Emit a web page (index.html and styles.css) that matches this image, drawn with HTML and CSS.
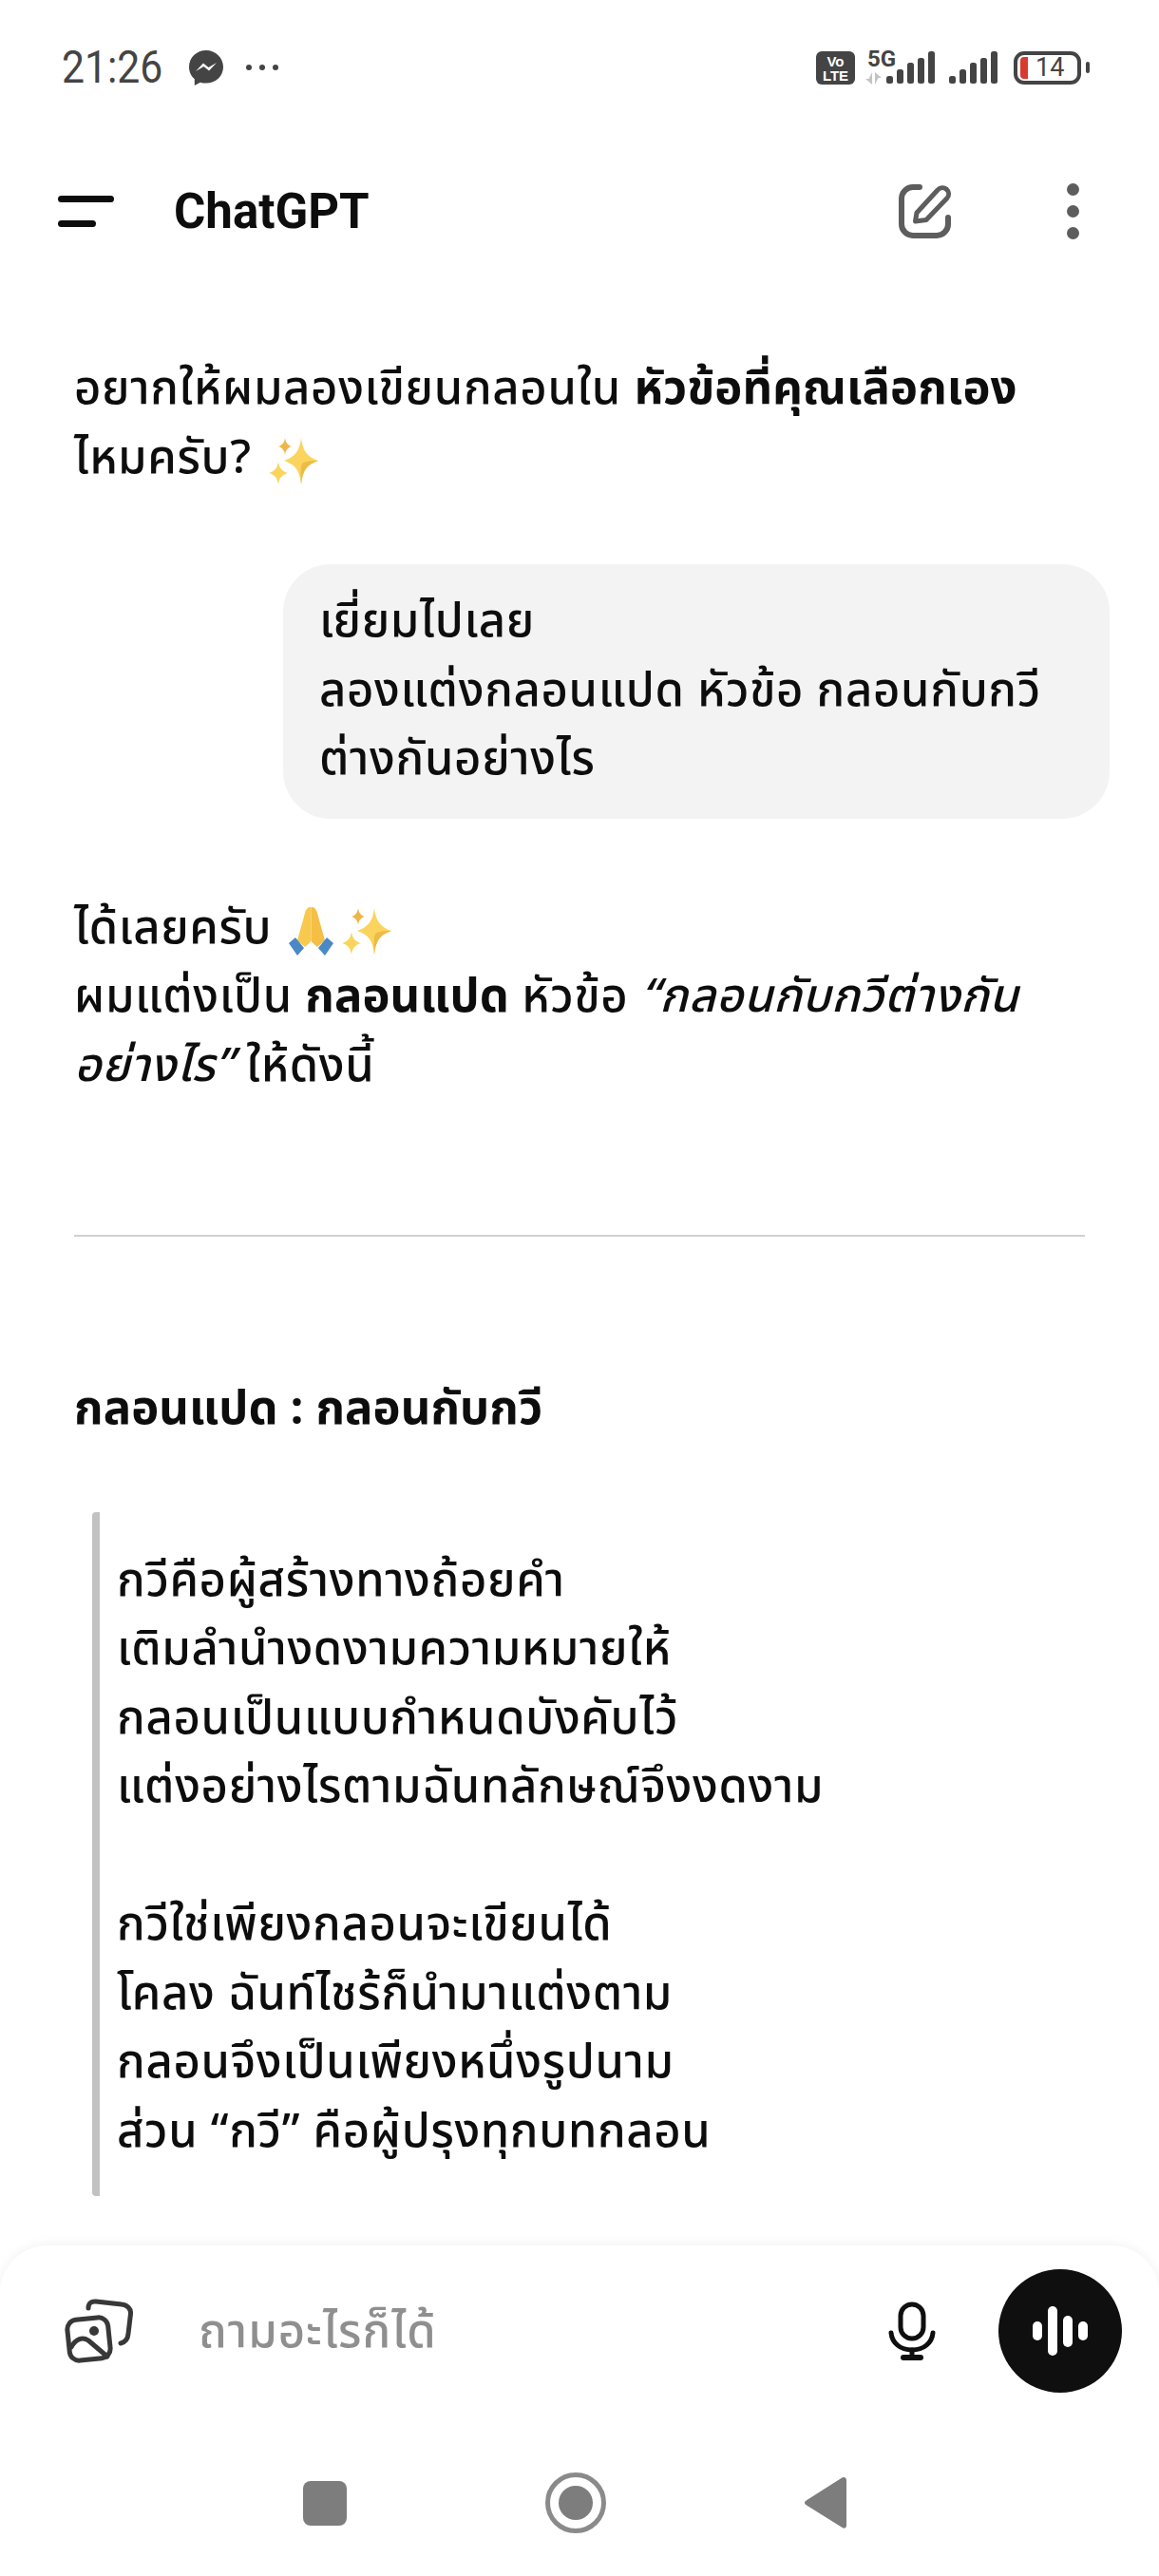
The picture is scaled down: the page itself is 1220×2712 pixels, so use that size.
FILE: index.html
```html
<!DOCTYPE html>
<html lang="th">
<head>
<meta charset="utf-8">
<title>ChatGPT</title>
<link rel="stylesheet" href="styles.css">
</head>
<body>
<svg class="defs" width="0" height="0" aria-hidden="true">
  <defs>
    <symbol id="sparkles" viewBox="0 0 52 49">
      <path d="M34 0c1.500 13 5.500 19.500 18 24-12.500 4-16.500 11-18 25-1.500-14-5.500-21-18-25 12.500-4.500 16.500-11 18-24z" fill="#fad45c"/>
      <path d="M34 49c-.6-8-1-18 1-22 3-2.500 10-3 17-3-12.500 4-16.500 11-18 25z" fill="#eebc45"/>
      <path d="M17 0c.8 5 2.500 7.500 7 9-4.500 1.500-6.200 4-7 8.500-.8-4.500-2.500-7-7-8.500 4.500-1.500 6.200-4 7-9z" fill="#eeb548"/>
      <path d="M10 25c1 6.500 3.500 10 10 12-6.500 2-9 5.500-10 12-1-6.500-3.500-10-10-12 6.500-2 9-5.500 10-12z" fill="#fad45c"/>
    </symbol>
  </defs>
</svg>
<div class="screen">
  <header class="status">
    <div class="status-left">
      <span class="clock">21:26</span>
      <svg class="messenger" viewBox="0 0 36 37"><path d="M18 0C8 0 0 7.500 0 17.500c0 5.300 2.200 9.800 5.800 12.800V37l6-3.300c2 .6 4 .9 6.200.9 10 0 18-7.500 18-17.100S28 0 18 0z" fill="#444"/><path d="M7 22l8-8.500 5.500 4.500 8.500-5-8 8.500-5.500-4.500z" fill="#fff"/></svg>
      <span class="dots3"><i></i><i></i><i></i></span>
    </div>
    <div class="status-right">
      <span class="volte">Vo<br>LTE</span>
      <span class="sig5g">
        <span class="label5g">5G</span>
        <svg class="arrows" viewBox="0 0 17 13"><path d="M7 0v13L0 7h3.500zM10 13V0l7 6h-3.500z" fill="#c4c4c4"/></svg>
      </span>
      <svg class="signal" viewBox="0 0 51 34"><g fill="#444"><rect x="0" y="26" width="7" height="8" rx="2.500"/><rect x="11" y="19" width="7" height="15" rx="2.500"/><rect x="22" y="12" width="7" height="22" rx="2.500"/><rect x="33" y="7" width="7" height="27" rx="2.500"/><rect x="44" y="0" width="7" height="34" rx="2.500"/></g></svg>
      <svg class="signal second" viewBox="0 0 51 34"><g fill="#444"><rect x="0" y="26" width="7" height="8" rx="2.500"/><rect x="11" y="19" width="7" height="15" rx="2.500"/><rect x="22" y="12" width="7" height="22" rx="2.500"/><rect x="33" y="7" width="7" height="27" rx="2.500"/><rect x="44" y="0" width="7" height="34" rx="2.500"/></g></svg>
      <span class="battery"><i class="level"></i><span class="pct">14</span></span>
      <i class="nub"></i>
    </div>
  </header>

  <nav class="topbar">
    <div class="burger"><i></i><i></i></div>
    <h1 class="title">ChatGPT</h1>
    <svg class="edit" viewBox="0 0 57 59" fill="none" stroke="#5d5d5d" stroke-width="6" stroke-linecap="round" stroke-linejoin="round"><path d="M23 4H16A12 12 0 0 0 4 16V43A12 12 0 0 0 16 55H41A12 12 0 0 0 53 43V36"/><path d="M18.500 40L20 31 42 7A6.500 6.500 0 0 1 52 15.500L30 38.500z" stroke-width="5"/></svg>
    <div class="more"><i></i><i></i><i></i></div>
  </nav>

  <main class="chat">
    <p class="para">อยากให้ผมลองเขียนกลอนใน <b>หัวข้อที่คุณเลือกเอง</b><br>ไหมครับ? <svg class="emoji"><use href="#sparkles"/></svg></p>

    <div class="bubble">เยี่ยมไปเลย<br>ลองแต่งกลอนแปด หัวข้อ กลอนกับกวี<br>ต่างกันอย่างไร</div>

    <p class="para reply">ได้เลยครับ <svg class="emoji pray" viewBox="0 0 47 52"><path d="M22.500 1c-3 0-5 3-6.500 10L9 36l8 7 5-4.500c1.200-1 1.500-2 1.500-4V2c0-.6-.5-1-1-1z" fill="#f8c94f"/><path d="M24.500 1c3 0 5 3 6.500 10l7 25-8 7-5-4.500c-1.200-1-1.500-2-1.500-4V2c0-.6.500-1 1-1z" fill="#f4bf44"/><path d="M0 39l7-6 9 11-7 8zM47 39l-7-6-9 11 7 8z" fill="#4a88c6"/></svg> <svg class="emoji follow"><use href="#sparkles"/></svg><br>ผมแต่งเป็น <b>กลอนแปด</b> หัวข้อ <em>“กลอนกับกวีต่างกัน<br>อย่างไร”</em> ให้ดังนี้</p>

    <hr class="rule">

    <h2 class="poem-title">กลอนแปด : กลอนกับกวี</h2>

    <blockquote class="poem">
      <p>กวีคือผู้สร้างทางถ้อยคำ<br>เติมลำนำงดงามความหมายให้<br>กลอนเป็นแบบกำหนดบังคับไว้<br>แต่งอย่างไรตามฉันทลักษณ์จึงงดงาม</p>
      <p>กวีใช่เพียงกลอนจะเขียนได้<br>โคลง ฉันท์ไชร้ก็นำมาแต่งตาม<br>กลอนจึงเป็นเพียงหนึ่งรูปนาม<br>ส่วน “กวี” คือผู้ปรุงทุกบทกลอน</p>
    </blockquote>
  </main>

  <footer class="composer">
    <div class="inputrow">
      <svg class="gallery" viewBox="0 0 72 68" fill="none" stroke="#383838" stroke-width="5" stroke-linecap="round" stroke-linejoin="round"><path d="M25 10C25 5 28 2.500 33 3L60 6C66 6.500 70 11 69.500 16L67 37C66.500 43 63 46 59 47"/><rect x="4" y="21" width="43" height="43" rx="10" transform="rotate(-6 25.500 42.500)"/><path d="M7 51C12 42 19 40 25 44L45 61"/><circle cx="31" cy="34" r="5" fill="#383838" stroke="none"/></svg>
      <span class="placeholder">ถามอะไรก็ได้</span>
      <svg class="mic" viewBox="0 0 50 62" fill="none" stroke="#0f0f0f" stroke-width="5" stroke-linecap="round"><rect x="13" y="3" width="24" height="36" rx="12"/><path d="M3 33C4 44 13 51 25 51S46 44 47 33"/><path d="M25 51V58"/><path d="M16 59H34" stroke-width="6"/></svg>
      <button class="voice" type="button" aria-label="voice"><i class="b1"></i><i class="b2"></i><i class="b3"></i><i class="b1"></i></button>
    </div>
    <div class="navbar">
      <i class="nav-square"></i>
      <i class="nav-ring"><i></i></i>
      <svg class="nav-back" viewBox="0 0 44 54"><path d="M41 0c2 0 3 1.500 3 3v48c0 2-2 3.500-4 2.300L2 29.500c-2.700-1.700-2.700-3.500 0-5.300L39 .8c.7-.5 1.300-.8 2-.8z" fill="#7d7d7d"/></svg>
    </div>
  </footer>
</div>
</body>
</html>
```
FILE: styles.css
```css
* { box-sizing: border-box; }
html, body { margin: 0; padding: 0; background: #fff; }
body { width: 1220px; height: 2712px; overflow: hidden; }
.defs { position: absolute; }
i { display: block; font-style: normal; }

.screen {
  width: 1220px;
  height: 2712px;
  display: flex;
  flex-direction: column;
  background: #fff;
  color: #0d0d0d;
  font-family: "Noto Sans Thai", "Noto Sans", "Inter", "Roboto", sans-serif;
}

/* status bar */
.status {
  height: 142px;
  padding: 0 73px 0 65px;
  display: flex;
  justify-content: space-between;
  align-items: center;
  flex: none;
}
.status-left { display: flex; align-items: center; }
.clock {
  width: 107px;
  font: 400 48px/1 "Roboto", sans-serif;
  color: #444;
  white-space: nowrap;
  transform: scaleX(.89);
  transform-origin: 0 50%;
}
.messenger { width: 36px; height: 37px; margin-left: 27px; }
.dots3 { display: flex; gap: 8px; margin-left: 24px; }
.dots3 i { width: 6px; height: 6px; border-radius: 50%; background: #444; }
.status-right { display: flex; align-items: center; }
.volte {
  width: 41px; height: 35px; border-radius: 6px; background: #444; color: #fff;
  font: 700 15px/15px "Liberation Sans", sans-serif; text-align: center; padding-top: 3px;
}
.sig5g { width: 34px; height: 38px; margin-left: 11px; display: flex; flex-direction: column; }
.label5g { font: 700 24px/21px "Roboto", sans-serif; color: #444; margin-left: 2px; }
.arrows { width: 17px; height: 13px; margin-top: 3px; }
.signal { width: 51px; height: 34px; margin-left: -12px; }
.signal.second { margin-left: 15px; }
.battery {
  width: 71px; height: 35px; margin-left: 17px; border: 4px solid #444; border-radius: 11px;
  display: flex; align-items: center; padding-left: 3px;
}
.level { width: 8px; height: 23px; background: #d93a2f; border-radius: 4px 0 0 4px; }
.pct { font: 400 27px/1 "Roboto", sans-serif; color: #444; margin-left: 8px; }
.nub { width: 4px; height: 12px; border-radius: 2px; background: #444; margin-left: 5px; }

/* top bar */
.topbar {
  height: 160px;
  padding: 0 84px 0 61px;
  display: flex;
  align-items: center;
  flex: none;
}
.burger { width: 59px; display: flex; flex-direction: column; gap: 19px; }
.burger i { height: 7px; border-radius: 4px; background: #0d0d0d; }
.burger i + i { width: 40px; }
.title { margin: 0 0 0 63px; font: 700 51px/1 "Roboto", sans-serif; flex: 1; color: #0d0d0d; }
.edit { width: 57px; height: 59px; margin-right: 121px; }
.more { display: flex; flex-direction: column; gap: 10px; }
.more i { width: 13px; height: 13px; border-radius: 50%; background: #5d5d5d; }

/* chat */
.chat {
  flex: 1;
  overflow: hidden;
  padding: 72px 78px 0;
  font-size: 49px;
  letter-spacing: .65px;
  line-height: 72.500px;
}
.para { margin: 0; font-weight: 500; }
.para b { font-weight: 700; letter-spacing: .1px; }
.emoji { width: 52px; height: 49px; vertical-align: -12px; margin-left: 5px; }
.emoji.pray { width: 47px; height: 52px; vertical-align: -13px; margin-left: 4px; margin-right: -4px; }
.emoji.follow { margin-left: 0; }
.bubble {
  margin: 75px -26px 0 220px;
  padding: 25px 38px;
  background: #f3f3f3;
  border-radius: 50px;
  font-weight: 500;
}
.reply { margin-top: 80px; }
.rule { margin: 141px 0 0; border: 0; border-top: 2px solid #d0d0d0; height: 0; }
.poem-title { margin: 146px 0 0; font-size: 49px; line-height: 72.500px; font-weight: 700; letter-spacing: .1px; }
.poem {
  margin: 71px 0 0 19px;
  padding: 37px 0 37px 18px;
  border-left: 8px solid #c2c2c2;
  border-radius: 4px;
  height: 720px;
}
.poem p { margin: 0 0 72.500px; font-weight: 500; }

/* composer */
.composer {
  height: 348px;
  flex: none;
  background: #fff;
  border-radius: 50px 50px 0 0;
  box-shadow: 0 -2px 12px rgba(0, 0, 0, .05);
  display: flex;
  flex-direction: column;
  position: relative;
}
.inputrow { display: flex; align-items: center; padding: 0 39px 0 68px; height: 180px; flex: none; }
.gallery { width: 72px; height: 68px; }
.placeholder { margin-left: 69px; padding-top: 4px; flex: 1; font-size: 49px; letter-spacing: 1px; font-weight: 500; color: #8f8f8f; }
.mic { width: 50px; height: 62px; margin-right: 66px; }
.voice {
  width: 130px; height: 130px; border: 0; border-radius: 50%; background: #0f0f0f; padding: 0;
  display: flex; align-items: center; justify-content: center; gap: 6px;
}
.voice i { width: 10px; background: #fff; border-radius: 5px; }
.b1 { height: 20px; }
.b2 { height: 52px; }
.b3 { height: 33px; }
.navbar { display: flex; align-items: center; height: 168px; padding: 14px 0 0 319px; }
.nav-square { width: 46px; height: 47px; border-radius: 8px; background: #7d7d7d; }
.nav-ring {
  width: 64px; height: 64px; margin-left: 209px; border-radius: 50%; border: 5px solid #8a8a8a;
  display: flex; align-items: center; justify-content: center;
}
.nav-ring i { width: 36px; height: 36px; border-radius: 50%; background: #7d7d7d; }
.nav-back { width: 44px; height: 54px; margin-left: 209px; }
```
